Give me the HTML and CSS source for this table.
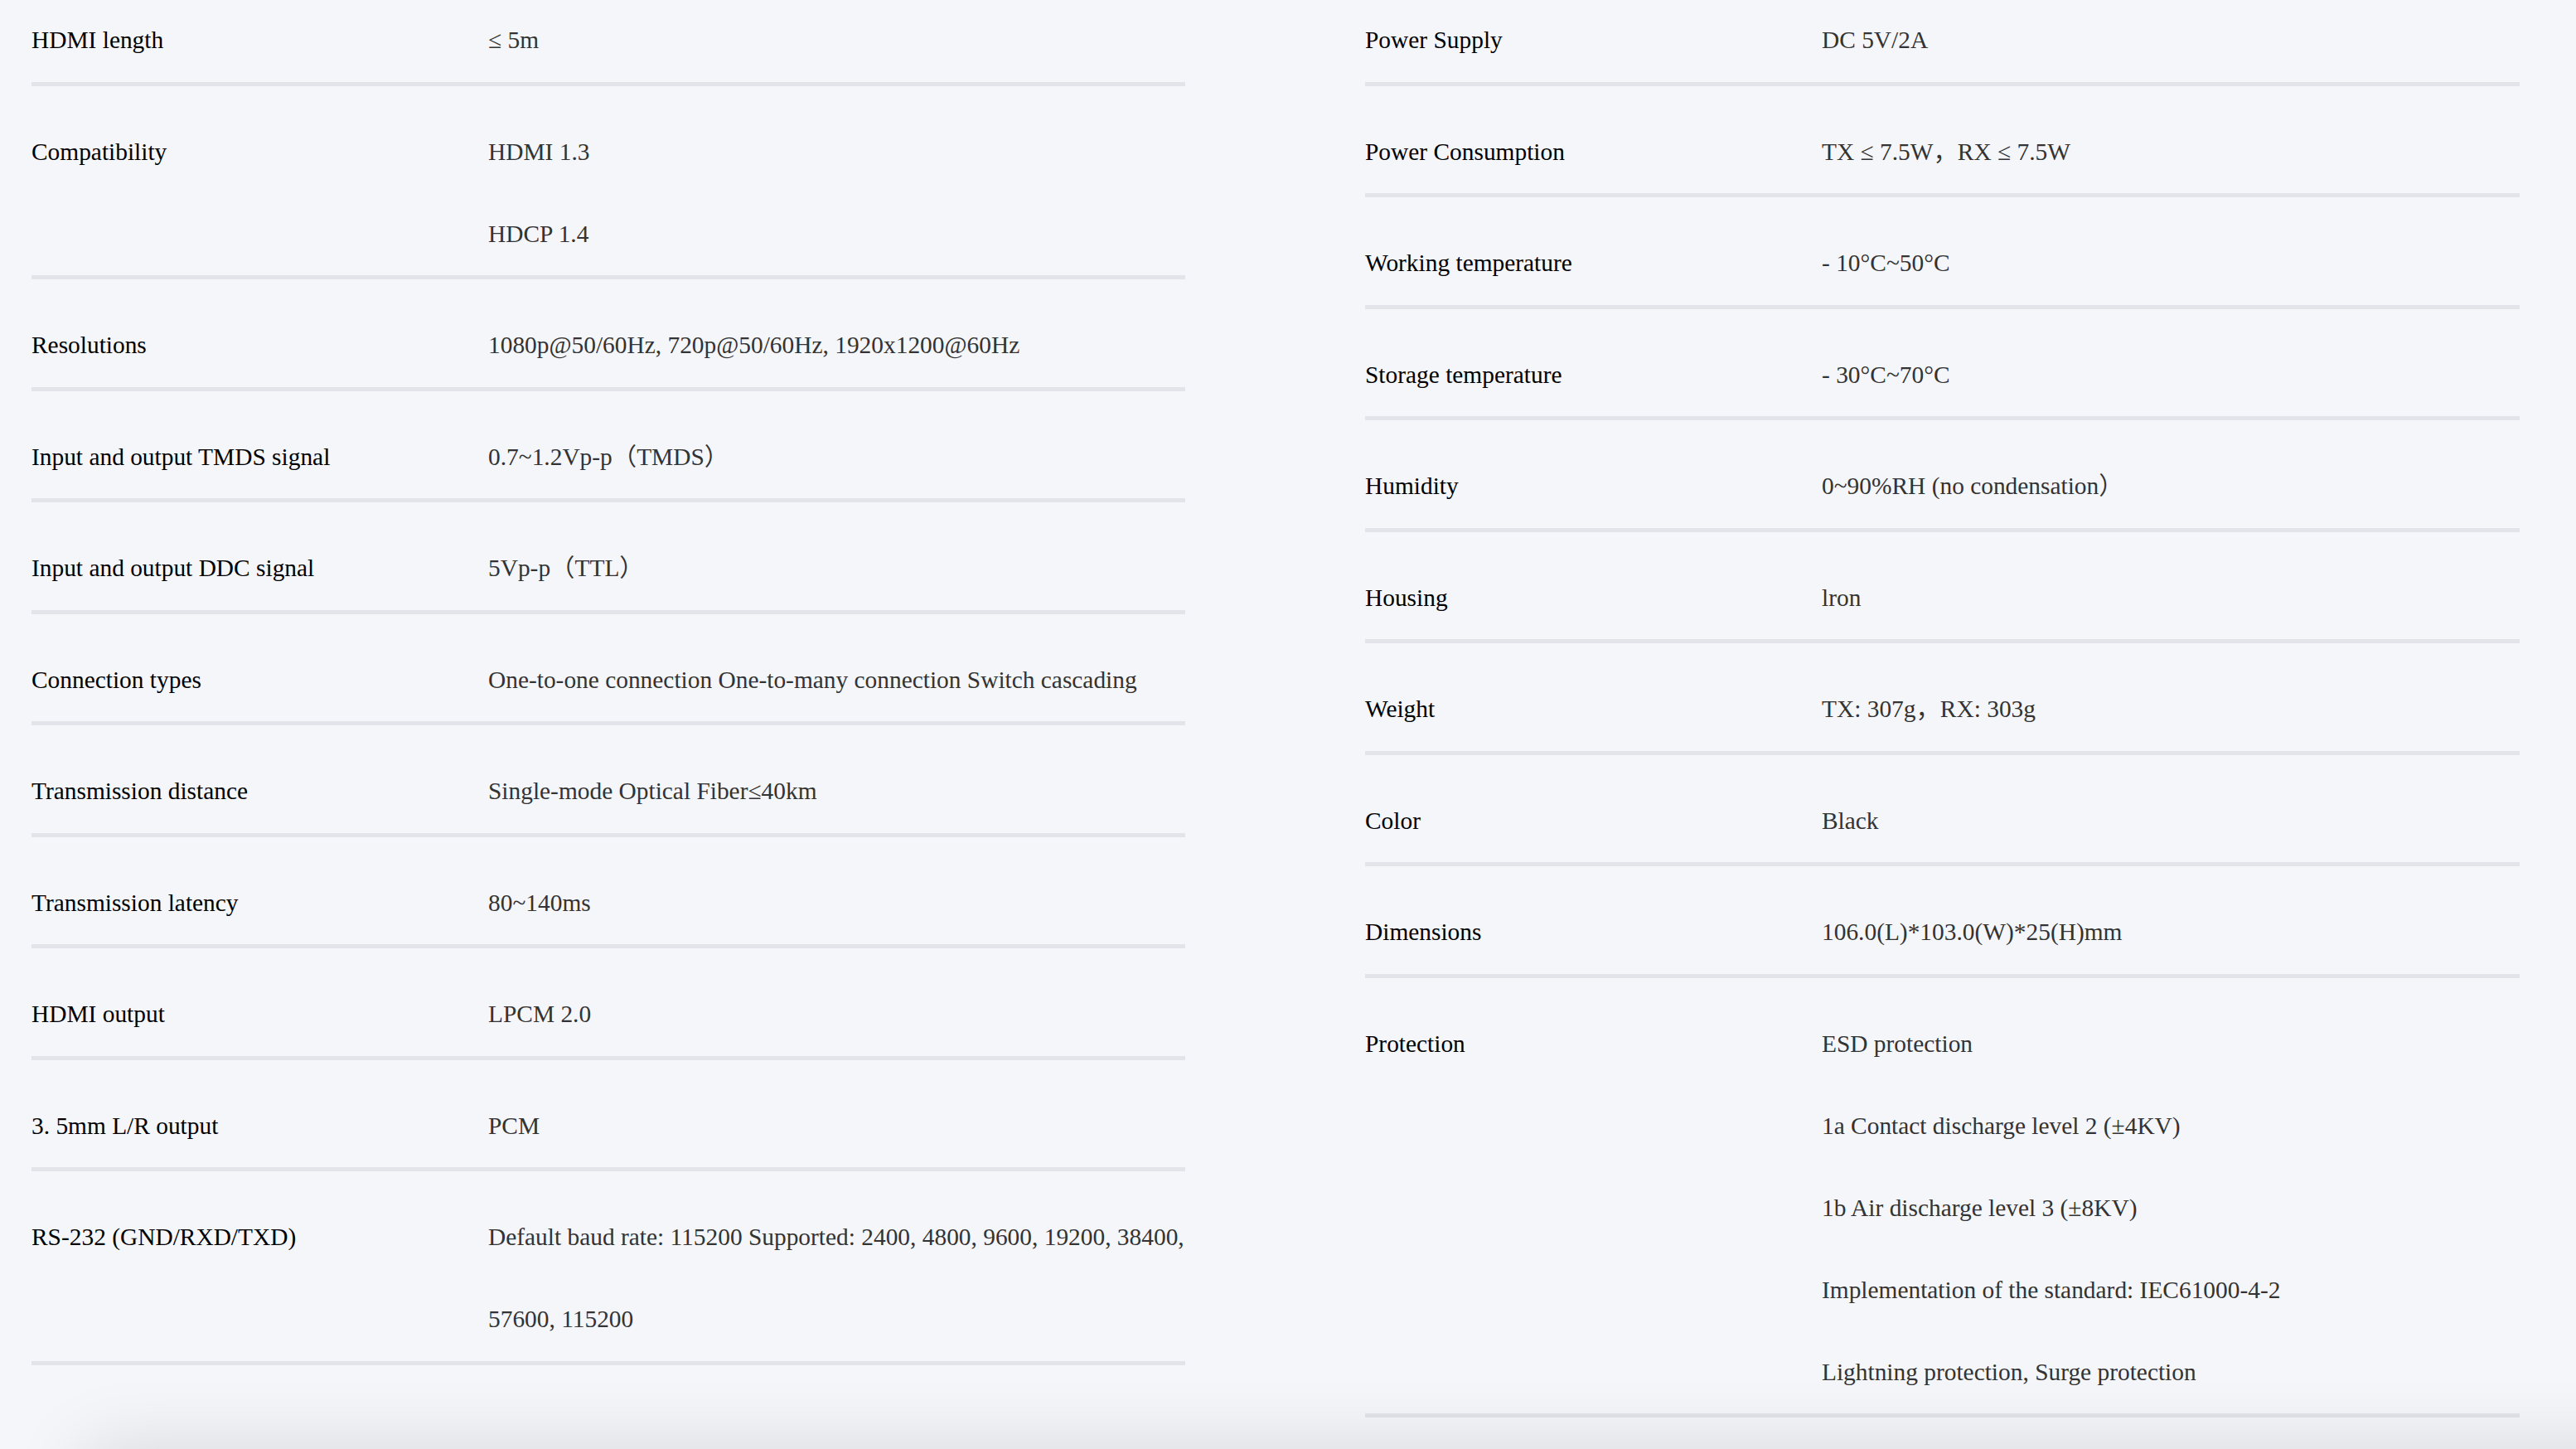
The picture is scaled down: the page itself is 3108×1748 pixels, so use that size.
FILE: index.html
```html
<!DOCTYPE html>
<html lang="en">
<head>
<meta charset="utf-8">
<title>Specifications</title>
<link rel="stylesheet" href="styles.css">
</head>
<body>
<main class="specs">
  <section class="spec-col">
    <div class="row"><div class="label">HDMI length</div><div class="value"><p>≤ 5m</p></div></div>
    <div class="row"><div class="label">Compatibility</div><div class="value"><p>HDMI 1.3</p><p>HDCP 1.4</p></div></div>
    <div class="row"><div class="label">Resolutions</div><div class="value"><p>1080p@50/60Hz, 720p@50/60Hz, 1920x1200@60Hz</p></div></div>
    <div class="row"><div class="label">Input and output TMDS signal</div><div class="value"><p>0.7~1.2Vp-p（TMDS）</p></div></div>
    <div class="row"><div class="label">Input and output DDC signal</div><div class="value"><p>5Vp-p（TTL）</p></div></div>
    <div class="row"><div class="label">Connection types</div><div class="value"><p>One-to-one connection One-to-many connection Switch cascading</p></div></div>
    <div class="row"><div class="label">Transmission distance</div><div class="value"><p>Single-mode Optical Fiber≤40km</p></div></div>
    <div class="row"><div class="label">Transmission latency</div><div class="value"><p>80~140ms</p></div></div>
    <div class="row"><div class="label">HDMI output</div><div class="value"><p>LPCM 2.0</p></div></div>
    <div class="row"><div class="label">3. 5mm L/R output</div><div class="value"><p>PCM</p></div></div>
    <div class="row"><div class="label">RS-232 (GND/RXD/TXD)</div><div class="value"><p>Default baud rate: 115200 Supported: 2400, 4800, 9600, 19200, 38400, 57600, 115200</p></div></div>
  </section>
  <section class="spec-col">
    <div class="row"><div class="label">Power Supply</div><div class="value"><p>DC 5V/2A</p></div></div>
    <div class="row"><div class="label">Power Consumption</div><div class="value"><p>TX ≤ 7.5W，RX ≤ 7.5W</p></div></div>
    <div class="row"><div class="label">Working temperature</div><div class="value"><p>- 10°C~50°C</p></div></div>
    <div class="row"><div class="label">Storage temperature</div><div class="value"><p>- 30°C~70°C</p></div></div>
    <div class="row"><div class="label">Humidity</div><div class="value"><p>0~90%RH (no condensation）</p></div></div>
    <div class="row"><div class="label">Housing</div><div class="value"><p>lron</p></div></div>
    <div class="row"><div class="label">Weight</div><div class="value"><p>TX: 307g，RX: 303g</p></div></div>
    <div class="row"><div class="label">Color</div><div class="value"><p>Black</p></div></div>
    <div class="row"><div class="label">Dimensions</div><div class="value"><p>106.0(L)*103.0(W)*25(H)mm</p></div></div>
    <div class="row"><div class="label">Protection</div><div class="value"><p>ESD protection</p><p>1a Contact discharge level 2 (±4KV)</p><p>1b Air discharge level 3 (±8KV)</p><p>Implementation of the standard: IEC61000-4-2</p><p>Lightning protection, Surge protection</p></div></div>
  </section>
</main>
<div class="next-panel"></div>
</body>
</html>
```
FILE: styles.css
```css
html, body {
  margin: 0;
  padding: 0;
  background: #f5f6fa;
  overflow: hidden;
  height: 100%;
}

body {
  font-family: "Liberation Serif", "Noto Sans CJK SC", serif;
  font-size: 29.4px;
}

.specs {
  display: grid;
  grid-template-columns: 1392px 1393px;
  column-gap: 217px;
  align-items: start;
  padding-left: 38px;
  margin-top: -31px;
}

.row {
  display: grid;
  grid-template-columns: 551px 1fr;
  padding: 30px 0 0.5px;
  border-bottom: 5px solid #e3e4ea;
}

.label {
  color: #000000;
  line-height: 99px;
}

.value {
  color: #333333;
}

.value p {
  margin: 0;
  line-height: 99px;
}

.next-panel {
  position: fixed;
  left: 100px;
  right: -200px;
  top: 100%;
  height: 300px;
  border-radius: 24px;
  background: #ffffff;
  box-shadow: 0 0 90px rgba(0, 0, 0, 0.13);
}
```
